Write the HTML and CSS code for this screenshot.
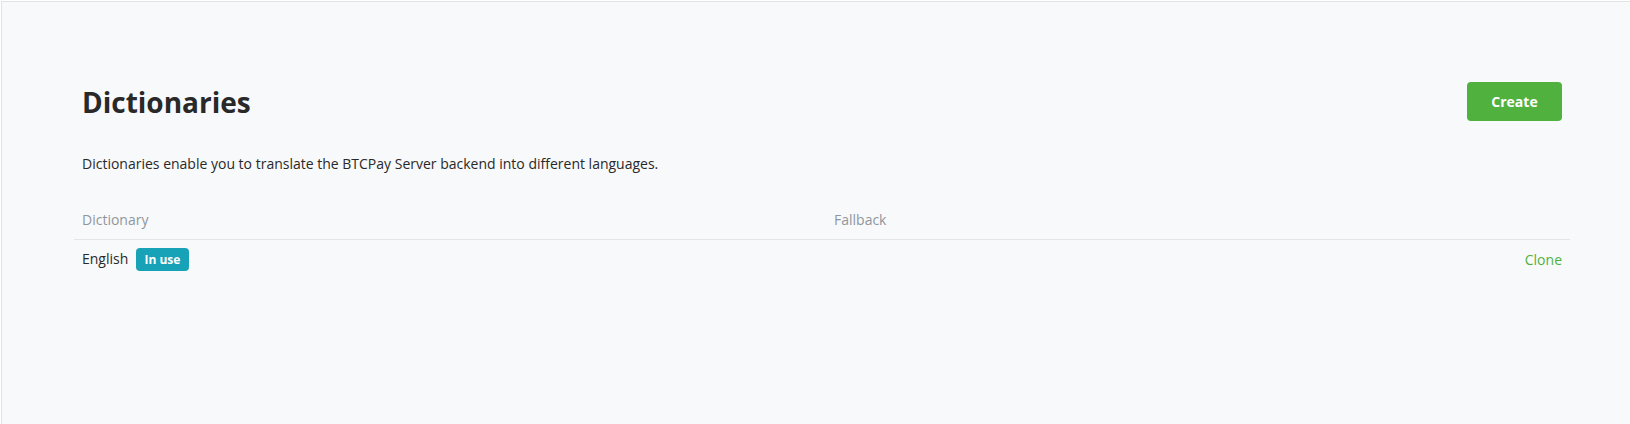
FILE: index.html
```html
<!DOCTYPE html>
<html lang="en">
<head>
<meta charset="utf-8">
<title>Dictionaries</title>
<link rel="stylesheet" href="styles.css">
</head>
<body>
<main class="main">
  <div class="header">
    <h2 class="title">Dictionaries</h2>
    <a class="btn-create" href="#">Create</a>
  </div>
  <p class="desc">Dictionaries enable you to translate the BTCPay Server backend into different languages.</p>
  <table class="table">
    <thead>
      <tr>
        <th class="col-dict">Dictionary</th>
        <th class="col-fallback">Fallback</th>
        <th class="col-actions"></th>
      </tr>
    </thead>
    <tbody>
      <tr>
        <td class="col-dict">English <span class="badge">In use</span></td>
        <td class="col-fallback"></td>
        <td class="col-actions"><a class="link" href="#">Clone</a></td>
      </tr>
    </tbody>
  </table>
</main>
</body>
</html>
```

FILE: styles.css
```css
* { box-sizing: border-box; }

html, body {
  margin: 0;
  height: 100%;
}

body {
  padding: 1px 0 0 1px;
  background: #ffffff;
  font-family: "Open Sans", "Liberation Sans", sans-serif;
  font-size: 14px;
  line-height: 21px;
  color: #292929;
}

.main {
  min-height: 423px;
  background: #f8f9fa;
  border-top: 1px solid #e1e3e5;
  border-left: 1px solid #e1e3e5;
  padding: 80px 68px 0 80px;
}

.header {
  display: flex;
  justify-content: space-between;
  align-items: center;
  height: 39px;
}

.title {
  margin: 0;
  font-size: 28px;
  line-height: 34px;
  font-weight: 700;
  color: #292929;
}

.btn-create {
  display: inline-flex;
  align-items: center;
  justify-content: center;
  width: 95px;
  height: 39px;
  background: #51b13e;
  color: #ffffff;
  font-weight: 700;
  font-size: 14px;
  text-decoration: none;
  border-radius: 4px;
}

.desc {
  margin: 32px 0 0 0;
}

.table {
  margin: 27px -8px 0 -8px;
  width: calc(100% + 16px);
  border-collapse: collapse;
}

.table th {
  font-weight: 400;
  color: #8f979e;
  text-align: left;
  padding: 8px 8px 9px 8px;
  border-bottom: 1px solid #e3e6e9;
}

.table td {
  padding: 8px 8px;
  vertical-align: middle;
}

.col-dict { width: 752px; }

.col-actions { text-align: right !important; }

.badge {
  display: inline-block;
  vertical-align: middle;
  margin-left: 4px;
  margin-top: -1px;
  padding: 4px 8.5px;
  font-size: 12px;
  line-height: 15px;
  font-weight: 700;
  color: #ffffff;
  background: #17a2b8;
  border-radius: 4px;
}

.link {
  color: #51b13e;
  text-decoration: none;
}
```
